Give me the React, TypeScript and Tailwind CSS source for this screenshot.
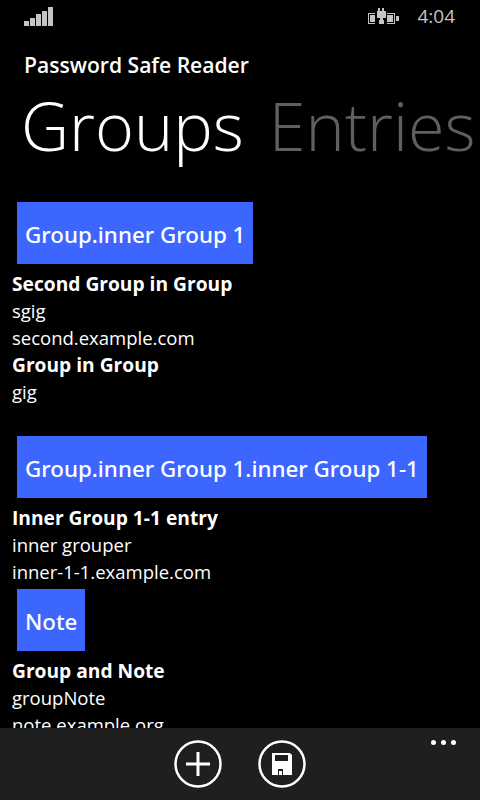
const font = "font-['Open_Sans','Noto_Sans',sans-serif]";

function Signal() {
  return (
    <svg width="30" height="20" viewBox="0 0 30 20" className="text-[#c4c4c4]" fill="currentColor">
      <rect x="0" y="14" width="5" height="5" />
      <rect x="6" y="11" width="5" height="8" />
      <rect x="12" y="7" width="5" height="12" />
      <rect x="18" y="4" width="5" height="15" />
      <rect x="24" y="0" width="5" height="19" />
    </svg>
  );
}

function Battery() {
  return (
    <svg width="33" height="18" viewBox="0 0 33 18" className="text-[#c4c4c4]" fill="currentColor">
      <path d="M1 5h7v1H2v9h6v1H1z" />
      <path d="M3 7h5v7H3z" />
      <path d="M11 0h2v3h-2zM15 0h2v3h-2z" />
      <path d="M10 3h9v7h-3v2h1v4h-5v-4h1v-2h-3z" />
      <path d="M20 5h8v11h-8v-1h7V6h-7z" />
      <path d="M20 7h6v7h-6z" />
      <rect x="29" y="8" width="3" height="5" />
    </svg>
  );
}

function Circle({ children }: { children: React.ReactNode }) {
  return (
    <svg width="48" height="48" viewBox="0 0 48 48" fill="none">
      <circle cx="24" cy="24" r="22.5" stroke="white" strokeWidth="2.5" />
      {children}
    </svg>
  );
}

function GroupHeader({ label, className }: { label: string; className: string }) {
  return (
    <div className={`ml-[17px] flex h-[62px] w-fit items-center bg-[#3d66ff] px-2 pt-[3px] font-['Noto_Sans',sans-serif] text-[22.35px] font-medium text-white ${className}`}>
      {label}
    </div>
  );
}

function Row({ title, lines }: { title: string; lines: string[] }) {
  return (
    <div className="pl-3 text-[18.5px] leading-[27px] text-white">
      <div className="text-[19.2px] font-bold">{title}</div>
      {lines.map((l) => (
        <div key={l}>{l}</div>
      ))}
    </div>
  );
}

export default function App() {
  return (
    <div className={`flex h-[800px] w-[480px] flex-col overflow-hidden bg-black ${font}`}>
      <div className="flex h-[33px] shrink-0 items-center justify-between pl-6 pr-[25px] text-[#c4c4c4]">
        <Signal />
        <div className="flex items-center gap-[17px]">
          <Battery />
          <span className="text-[19px]">4:04</span>
        </div>
      </div>
      <div className="mt-[18px] h-[28px] shrink-0 pl-6 text-[21.1px] font-semibold leading-[28px] text-white">
        Password Safe Reader
      </div>
      <div className="mt-[4px] flex h-[85px] shrink-0 gap-[25px] whitespace-nowrap pl-[21px] text-[66.5px] font-light leading-[85px]">
        <span className="text-white">Groups</span>
        <span className="text-[#5f5f5f]">Entries</span>
      </div>
      <div className="min-h-0 flex-1 overflow-hidden pt-[34px]">
        <GroupHeader label="Group.inner Group 1" className="" />
        <div className="mt-[6px]">
          <Row title="Second Group in Group" lines={["sgig", "second.example.com"]} />
          <Row title="Group in Group" lines={["gig"]} />
        </div>
        <GroupHeader label="Group.inner Group 1.inner Group 1-1" className="mt-[31px]" />
        <div className="mt-[6px]">
          <Row title="Inner Group 1-1 entry" lines={["inner grouper", "inner-1-1.example.com"]} />
        </div>
        <GroupHeader label="Note" className="mt-[4px]" />
        <div className="mt-[6px]">
          <Row title="Group and Note" lines={["groupNote", "note.example.org"]} />
        </div>
      </div>
      <div className="relative flex h-[72px] shrink-0 justify-center gap-[36px] bg-[#1f1f1f] pt-[12px]">
        <Circle>
          <path d="M24 12v24M12 24h24" stroke="white" strokeWidth="3" />
        </Circle>
        <Circle>
          <path
            fillRule="evenodd"
            clipRule="evenodd"
            d="M14 13h18l2 2v20H14zM17 15v6h13v-6zM20 29v6h5v-6z"
            fill="white"
          />
          <rect x="21" y="31" width="3" height="4" fill="white" />
        </Circle>
        <div className="absolute right-[24px] top-[12px] flex gap-[5px]">
          <span className="size-[5px] rounded-full bg-white" />
          <span className="size-[5px] rounded-full bg-white" />
          <span className="size-[5px] rounded-full bg-white" />
        </div>
      </div>
    </div>
  );
}
